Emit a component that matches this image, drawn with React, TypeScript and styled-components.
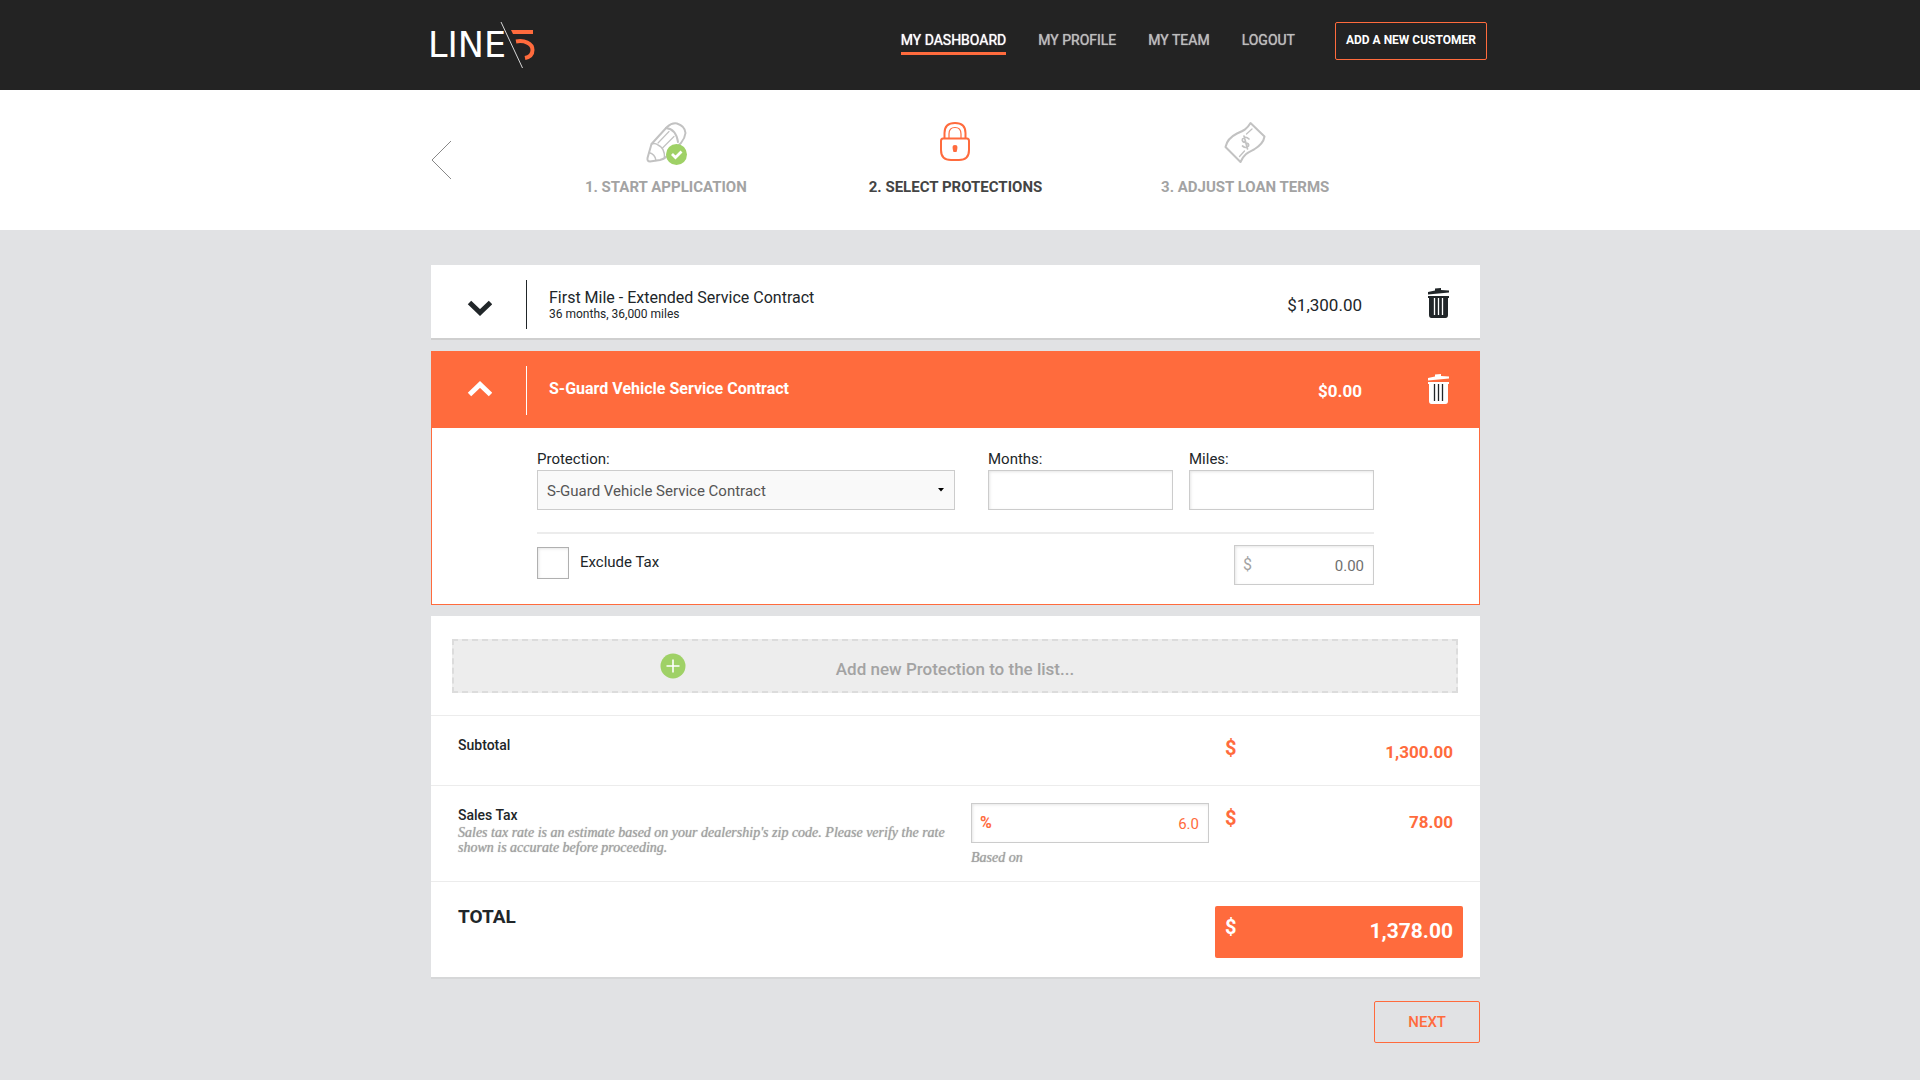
import React, { useId, useState } from "react";
import styled, { createGlobalStyle, css } from "styled-components";

const color = {
  orange: "#ff6b3d",
  green: "#9fd166",
  ink: "#212629",
  muted: "#a3a3a3",
  line: "#ececec",
  field: "#cccccc",
  page: "#e1e2e4",
  header: "#232323",
};

const GlobalStyle = createGlobalStyle`
  *, *::before, *::after { box-sizing: border-box; }
  body {
    margin: 0;
    background: ${color.page};
    color: ${color.ink};
    font-family: Roboto, "Liberation Sans", sans-serif;
    font-size: 15px;
    line-height: 20px;
  }
  button, input, select { font: inherit; color: inherit; margin: 0; }
  button { cursor: pointer; }
`;

const Container = styled.div<{ $end?: number }>`
  max-width: 1058px;
  margin: 0 auto;
  padding-right: ${(p) => p.$end ?? 9}px;
`;

/* ---------- top bar ---------- */

const TopBar = styled.header`
  background: ${color.header};
`;

const TopBarInner = styled(Container)`
  display: flex;
  justify-content: space-between;
  align-items: flex-start;
  height: 90px;
`;

const LogoLink = styled.a`
  display: block;
  margin-left: -4px;
  padding-top: 20px;
  svg { display: block; }
`;

const Nav = styled.nav`
  display: flex;
  align-items: flex-start;
  gap: 32px;
  padding-top: 22px;
`;

const NavLink = styled.a<{ $active?: boolean }>`
  margin-top: 8px;
  padding-bottom: 2px;
  border-bottom: 3px solid ${(p) => (p.$active ? color.orange : "transparent")};
  color: ${(p) => (p.$active ? "#ffffff" : "#bdbdbd")};
  font-size: 14px;
  font-weight: 400;
  line-height: 20px;
  text-decoration: none;
  text-shadow: 0 0 1px currentColor;
  text-transform: uppercase;
`;

const OutlineButton = styled.button<{ $small?: boolean }>`
  border: 1px solid ${color.orange};
  border-radius: 2px;
  background: transparent;
  text-transform: uppercase;
  ${(p) =>
    p.$small
      ? css`
          height: 38px;
          margin-left: 8px;
          padding: 0 10px 2px;
          color: #ffffff;
          font-size: 12px;
          font-weight: 700;
        `
      : css`
          height: 42px;
          padding: 0 33px;
          color: ${color.orange};
          font-size: 15px;
          font-weight: 500;
        `}
`;

/* ---------- wizard steps ---------- */

const StepsBar = styled.section`
  background: #ffffff;
`;

const StepsInner = styled(Container)`
  display: flex;
  align-items: flex-start;
  height: 140px;
`;

const BackLink = styled.a`
  flex: 0 0 90px;
  padding-top: 50px;
  svg { display: block; }
`;

const StepList = styled.ol`
  flex: 1;
  display: grid;
  grid-template-columns: repeat(3, 1fr);
  margin: 0;
  padding: 30px 90px 0 0;
  list-style: none;
`;

const Step = styled.li<{ $active?: boolean }>`
  display: flex;
  flex-direction: column;
  align-items: center;
  gap: 11px;
  color: ${(p) => (p.$active ? "#444444" : color.muted)};
  font-size: 15px;
  font-weight: 700;
  text-transform: uppercase;
  svg { display: block; }
`;

/* ---------- protections ---------- */

const Content = styled(Container)`
  padding-top: 35px;
  padding-bottom: 37px;
`;

const Card = styled.article<{ $active?: boolean }>`
  margin-bottom: ${(p) => (p.$active ? 11 : 13)}px;
  background: #ffffff;
  box-shadow: ${(p) => (p.$active ? "none" : "0 2px 0 #cfcfcf")};
`;

const CardHead = styled.div<{ $active?: boolean }>`
  display: grid;
  grid-template-columns: 95px 1fr auto 82px;
  align-items: center;
  padding: ${(p) => (p.$active ? "15px 0 13px" : "15px 0 9px")};
  background: ${(p) => (p.$active ? color.orange : "#ffffff")};
  color: ${(p) => (p.$active ? "#ffffff" : color.ink)};
  font-weight: ${(p) => (p.$active ? 700 : 400)};
`;

const IconButton = styled.button`
  justify-self: center;
  padding: 0;
  border: 0;
  background: none;
  color: inherit;
  svg { display: block; }
`;

const CardInfo = styled.div<{ $active?: boolean }>`
  display: flex;
  flex-direction: column;
  justify-content: center;
  height: 49px;
  padding: 0 0 ${(p) => (p.$active ? 4 : 0)}px 22px;
  border-left: 1px solid currentColor;
`;

const CardTitle = styled.h2`
  margin: 0;
  font-size: 16px;
  font-weight: inherit;
  line-height: 20px;
`;

const CardNote = styled.p`
  margin: 0;
  font-size: 12px;
  line-height: 13px;
`;

const CardPrice = styled.span`
  padding: 0 36px 0 0;
  font-size: 17px;
`;

const CardBody = styled.div`
  padding: 21px 105px 19px;
  border: solid ${color.orange};
  border-width: 0 1px 1px;
`;

const FieldRow = styled.div`
  display: grid;
  grid-template-columns: 1fr 185px 185px;
  column-gap: 16px;
  padding-bottom: 22px;
  border-bottom: 2px solid ${color.line};
`;

const Field = styled.div<{ $wide?: boolean }>`
  display: flex;
  flex-direction: column;
  gap: 1px;
  margin-right: ${(p) => (p.$wide ? 17 : 0)}px;
`;

const fieldBox = css`
  height: 40px;
  border: 1px solid ${color.field};
  border-radius: 0;
  background: #ffffff;
  box-shadow: inset 1px 1px 3px rgba(0, 0, 0, 0.1);
`;

const TextInput = styled.input`
  ${fieldBox}
  width: 100%;
  padding: 0 8px;
`;

const SelectWrap = styled.div`
  display: grid;
  align-items: center;
  svg {
    grid-area: 1 / 1;
    justify-self: end;
    margin-right: 11px;
    pointer-events: none;
  }
`;

const Select = styled.select`
  ${fieldBox}
  grid-area: 1 / 1;
  appearance: none;
  width: 100%;
  padding: 2px 30px 0 9px;
  background: #f9f9f9;
  box-shadow: none;
  color: #555555;
`;

const TaxRow = styled.div`
  display: flex;
  justify-content: space-between;
  align-items: flex-start;
  padding-top: 11px;
`;

const CheckLabel = styled.label`
  display: flex;
  align-items: flex-start;
  gap: 11px;
  padding-top: 2px;
  line-height: 30px;
`;

const Checkbox = styled.input`
  appearance: none;
  display: grid;
  place-items: center;
  width: 32px;
  height: 32px;
  border: 1px solid #b0b0b0;
  background: #ffffff;
  box-shadow: inset 1px 1px 3px rgba(0, 0, 0, 0.1);
  &:checked::after {
    content: "";
    width: 16px;
    height: 16px;
    background: ${color.orange};
  }
`;

const Adorned = styled.label<{ $accent?: boolean }>`
  ${fieldBox}
  display: flex;
  align-items: center;
  width: ${(p) => (p.$accent ? "auto" : "140px")};
  padding: 0 9px 0 8px;
  color: ${(p) => (p.$accent ? color.orange : "#a3a3a3")};
  font-weight: ${(p) => (p.$accent ? 700 : 400)};
  font-size: 16px;
`;

const BareInput = styled.input<{ $accent?: boolean }>`
  flex: 1;
  min-width: 0;
  padding: 2px 0 0;
  border: 0;
  outline: 0;
  background: transparent;
  color: ${(p) => (p.$accent ? color.orange : "#6f6f6f")};
  font-weight: 400;
  font-size: 15px;
  text-align: right;
`;

/* ---------- summary ---------- */

const Summary = styled.section`
  background: #ffffff;
  box-shadow: 0 2px 0 #d6d7d8;
`;

const AddArea = styled.div`
  padding: 23px 22px 22px 21px;
`;

const AddButton = styled.button`
  display: grid;
  grid-template-columns: 1fr auto 1fr;
  align-items: center;
  width: 100%;
  height: 54px;
  padding: 0;
  border: 2px dashed #dcdcdc;
  background: #ededed;
  color: ${color.muted};
  font-size: 17px;
  font-weight: 500;
  svg {
    display: block;
    justify-self: center;
    margin-left: 56px;
  }
`;

const AddText = styled.span`
  padding-top: 6px;
`;

const SummaryRow = styled.div<{ $height: number }>`
  display: grid;
  grid-template-columns: 1fr 238px 248px;
  column-gap: 6px;
  align-items: start;
  min-height: ${(p) => p.$height}px;
  padding: 17px 17px 0 27px;
  border-top: 1px solid ${color.line};
`;

const RowTitle = styled.h3<{ $big?: boolean }>`
  margin: ${(p) => (p.$big ? "8px" : "3px")} 0 0;
  font-size: ${(p) => (p.$big ? 19 : 14)}px;
  font-weight: ${(p) => (p.$big ? 700 : 500)};
  line-height: 19px;
`;

const Hint = styled.p`
  margin: 0;
  color: ${color.muted};
  font-family: "Liberation Serif", serif;
  font-size: 14px;
  font-style: italic;
  line-height: 15px;
  text-shadow: 0 0 1px currentColor;
`;

const RateHint = styled(Hint)`
  margin-top: 7px;
`;

const Amount = styled.div<{ $total?: boolean }>`
  grid-column: 3;
  display: flex;
  justify-content: space-between;
  align-items: flex-start;
  padding: 4px 10px 0;
  color: ${color.orange};
  font-size: 17px;
  font-weight: 700;
  ${(p) =>
    p.$total &&
    css`
      height: 52px;
      margin-top: 7px;
      padding-top: 10px;
      border-radius: 2px;
      background: ${color.orange};
      color: #ffffff;
      font-size: 21px;
    `}
`;

const Currency = styled.span`
  padding-top: 1px;
  font-size: 20px;
`;

const Figure = styled.span`
  padding-top: 5px;
`;

const Actions = styled.div`
  display: flex;
  justify-content: flex-end;
  padding-top: 24px;
`;

/* ---------- drawings ---------- */

const Logo = () => (
  <svg width="110" height="50" viewBox="-4 0 110 50" role="img" aria-label="Line 5">
    <text x="-3" y="37" fill="#ffffff" fontFamily="'DejaVu Sans', sans-serif" fontSize="35">LINE</text>
    <path d="M72.500 2 94 48" stroke={color.header} strokeWidth="6" />
    <path d="M70 2 91.500 48" stroke="#d8d8d8" strokeWidth="1" />
    <path d="M80 10H102V14H82Z" fill={color.orange} />
    <path d="M85 21.500C93 20 101.500 23 101.500 30C101.500 34 99 37 94 38" fill="none" stroke={color.orange} strokeWidth="4" />
  </svg>
);

const BackIcon = () => (
  <svg width="21" height="40" viewBox="0 0 21 40" fill="none" stroke="#888888" strokeWidth="1">
    <path d="M20 1 1 20 20 39" />
  </svg>
);

const PencilDoneIcon = () => (
  <svg width="44" height="46" viewBox="-2 0 44 46" fill="none" stroke="#c2c2c2" strokeWidth="2" strokeLinejoin="round" strokeLinecap="round">
    <path d="M5.500 24 21 7Q26 2.500 31 3.500Q39 6 39.500 13Q39 18 35 23L20 37Q18 39 14 40L4 41.500Q1 41.500 1.500 38Z" />
    <path d="M5.500 24Q9 22.500 12 25Q19 28 18.500 38M3 32.500Q9 34 10 40.500" strokeWidth="1.500" />
    <path d="M20 8Q30 9 32 22" />
    <path d="M12 23 23 11.500M16.500 28 28 16.500" strokeWidth="1.200" />
    <circle cx="30.500" cy="34.500" r="10.500" fill={color.green} stroke="none" />
    <path d="M26 34 29.500 37.500 35.500 31.500" stroke="#ffffff" strokeWidth="2.800" strokeLinecap="butt" strokeLinejoin="miter" />
  </svg>
);

const LockIcon = () => (
  <svg width="32" height="46" viewBox="0 0 32 46" fill="none" stroke={color.orange} strokeWidth="2">
    <path d="M5.500 19V13C5.500 6 10 3 16 3S26.500 6 26.500 13V19" />
    <path d="M10 19V14C10 10 12 7.500 16 7.500S22 10 22 14V19" strokeWidth="1.200" />
    <path d="M4 18.500H28Q30 18.500 30 21V30Q30 40 20 40H12Q2 40 2 30V21Q2 18.500 4 18.500Z" />
    <path d="M16 25C19.500 25 18.500 28.500 17.500 32H14.500C13.500 28.500 12.500 25 16 25Z" fill={color.orange} stroke="none" />
  </svg>
);

const MoneyIcon = () => (
  <svg width="42" height="46" viewBox="0 0 42 46" fill="none" stroke="#c2c2c2" strokeWidth="2" strokeLinejoin="round" strokeLinecap="round">
    <path d="M26.500 3 40.500 16.500C39.500 23 35 26.500 30 29.500C24 32.500 20 34 16.500 42L1.500 27C3 19.500 8 16 13 13.500C20 10.500 23 9 26.500 3Z" />
    <path d="M22.500 14 28 9M15.500 36.500 20.500 31" strokeWidth="1.300" />
    <path d="M25 19Q21.500 15.500 18.500 19Q17.500 22 21.500 22.500Q25.500 23.500 24.500 26Q22 29 18.500 26M20 16 23.500 29" strokeWidth="1.700" />
  </svg>
);

const ChevronIcon = ({ up }: { up?: boolean }) => (
  <svg width="26" height="24" viewBox="-2 0 26 24" fill="none" stroke="currentColor" strokeWidth="5">
    <path d={up ? "M1.500 15.500 12 5.500 22.500 15.500" : "M1.500 9.500 12 19.500 22.500 9.500"} />
  </svg>
);

const TrashIcon = ({ bars }: { bars: string }) => (
  <svg width="24" height="36" viewBox="0 0 24 36">
    <path d="M1 5 8 3.500V1.500L14 1V3L22 3.500V5.500L1 7.500Z" fill="currentColor" />
    <path d="M1 9H22V11H21V28Q21 31 18.500 31H4.500Q2 31 2 28V11H1Z" fill="currentColor" />
    <path d="M7.500 11V28M11.500 11V28M15.500 11V28" stroke={bars} strokeWidth="1.300" />
  </svg>
);

const PlusIcon = () => (
  <svg width="26" height="26" viewBox="0 0 26 26">
    <circle cx="13" cy="13" r="12.500" fill={color.green} />
    <path d="M13 6.500V19.500M6.500 13H19.500" stroke="#ffffff" strokeWidth="1.600" />
  </svg>
);

/* ---------- page ---------- */

const steps = [
  { label: "1. Start Application", icon: <PencilDoneIcon /> },
  { label: "2. Select Protections", icon: <LockIcon />, active: true },
  { label: "3. Adjust Loan Terms", icon: <MoneyIcon /> },
];

interface HeadProps {
  title: string;
  note?: string;
  price: string;
  active?: boolean;
}

const ProtectionHead = ({ title, note, price, active }: HeadProps) => (
  <CardHead $active={active}>
    <IconButton type="button" aria-label={active ? "Collapse" : "Expand"}>
      <ChevronIcon up={active} />
    </IconButton>
    <CardInfo $active={active}>
      <CardTitle>{title}</CardTitle>
      {note && <CardNote>{note}</CardNote>}
    </CardInfo>
    <CardPrice>{price}</CardPrice>
    <IconButton type="button" aria-label="Remove">
      <TrashIcon bars={active ? color.ink : "#ffffff"} />
    </IconButton>
  </CardHead>
);

export default function App() {
  const id = useId();
  const [price, setPrice] = useState("0.00");
  const [rate, setRate] = useState("6.0");

  return (
    <>
      <GlobalStyle />
      <TopBar>
        <TopBarInner $end={2}>
          <LogoLink href="#"><Logo /></LogoLink>
          <Nav>
            <NavLink href="#" $active>My Dashboard</NavLink>
            <NavLink href="#">My Profile</NavLink>
            <NavLink href="#">My Team</NavLink>
            <NavLink href="#">Logout</NavLink>
            <OutlineButton type="button" $small>Add a new customer</OutlineButton>
          </Nav>
        </TopBarInner>
      </TopBar>

      <StepsBar>
        <StepsInner>
          <BackLink href="#" aria-label="Back"><BackIcon /></BackLink>
          <StepList>
            {steps.map((s) => (
              <Step key={s.label} $active={s.active}>
                {s.icon}
                {s.label}
              </Step>
            ))}
          </StepList>
        </StepsInner>
      </StepsBar>

      <Content as="main">
        <Card>
          <ProtectionHead title="First Mile - Extended Service Contract" note="36 months, 36,000 miles" price="$1,300.00" />
        </Card>

        <Card $active>
          <ProtectionHead active title="S-Guard Vehicle Service Contract" price="$0.00" />
          <CardBody>
            <FieldRow>
              <Field $wide>
                <label htmlFor={`${id}-protection`}>Protection:</label>
                <SelectWrap>
                  <Select id={`${id}-protection`}>
                    <option>S-Guard Vehicle Service Contract</option>
                  </Select>
                  <svg width="6" height="4" viewBox="0 0 6 4"><path d="M0 0H6L3 3.500Z" /></svg>
                </SelectWrap>
              </Field>
              <Field>
                <label htmlFor={`${id}-months`}>Months:</label>
                <TextInput id={`${id}-months`} />
              </Field>
              <Field>
                <label htmlFor={`${id}-miles`}>Miles:</label>
                <TextInput id={`${id}-miles`} />
              </Field>
            </FieldRow>
            <TaxRow>
              <CheckLabel>
                <Checkbox type="checkbox" />
                Exclude Tax
              </CheckLabel>
              <Adorned>
                $
                <BareInput aria-label="Price" value={price} onChange={(e) => setPrice(e.target.value)} />
              </Adorned>
            </TaxRow>
          </CardBody>
        </Card>

        <Summary>
          <AddArea>
            <AddButton type="button">
              <PlusIcon />
              <AddText>Add new Protection to the list...</AddText>
            </AddButton>
          </AddArea>
          <SummaryRow $height={70}>
            <RowTitle>Subtotal</RowTitle>
            <Amount>
              <Currency>$</Currency>
              <Figure>1,300.00</Figure>
            </Amount>
          </SummaryRow>
          <SummaryRow $height={96}>
            <div>
              <RowTitle>Sales Tax</RowTitle>
              <Hint>
                Sales tax rate is an estimate based on your dealership's zip code. Please verify the rate shown is
                accurate before proceeding.
              </Hint>
            </div>
            <div>
              <Adorned $accent>
                %
                <BareInput $accent aria-label="Sales tax rate" value={rate} onChange={(e) => setRate(e.target.value)} />
              </Adorned>
              <RateHint>Based on</RateHint>
            </div>
            <Amount>
              <Currency>$</Currency>
              <Figure>78.00</Figure>
            </Amount>
          </SummaryRow>
          <SummaryRow $height={96}>
            <RowTitle $big>TOTAL</RowTitle>
            <Amount $total>
              <Currency>$</Currency>
              <Figure>1,378.00</Figure>
            </Amount>
          </SummaryRow>
        </Summary>

        <Actions>
          <OutlineButton type="button">Next</OutlineButton>
        </Actions>
      </Content>
    </>
  );
}
